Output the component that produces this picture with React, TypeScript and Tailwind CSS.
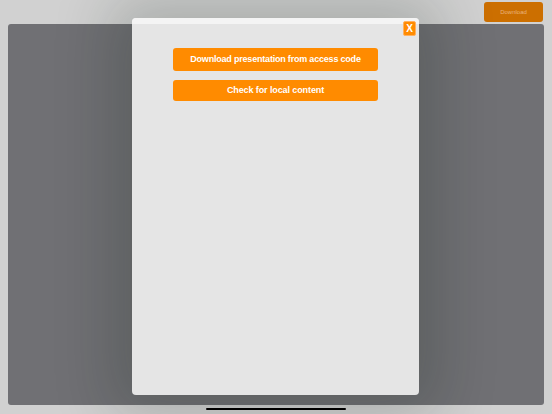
import React from "react";

export default function App() {
  return (
    <div
      className="relative w-[552px] h-[414px] overflow-hidden bg-[#d1d1d1] flex flex-col"
      style={{ fontFamily: '"Liberation Sans", Arial, sans-serif' }}
    >
      <div className="h-[24px] flex justify-end items-start pt-[2px] pr-[9px]">
        <button className="w-[59px] h-[20px] rounded-[3px] bg-[#cc6f00] text-[6px] text-[#eab37c] flex items-center justify-center">
          Download
        </button>
      </div>
      <div className="flex-1 mx-[8px] mb-[9px] rounded-[3px] bg-[#707074]" />

      <div className="absolute left-[132px] top-[18px] w-[287px] h-[377px] rounded-[4px] bg-[#e5e5e5] overflow-hidden flex flex-col shadow-[0_0_60px_20px_rgba(15,30,20,0.2)]">
        <div className="h-[6px] bg-[#f4f4f4]" />
        <div className="flex flex-col items-center pt-[24px] gap-[9px]">
          <button className="w-[205px] h-[23px] rounded-[3px] bg-[#ff8b00] text-white font-bold text-[9px] tracking-[-0.2px] flex items-center justify-center">
            Download presentation from access code
          </button>
          <button className="w-[205px] h-[21px] rounded-[3px] bg-[#ff8b00] text-white font-bold text-[9px] tracking-[-0.1px] flex items-center justify-center">
            Check for local content
          </button>
        </div>
        <button className="absolute right-[3px] top-[3px] w-[13px] h-[15px] rounded-[2px] bg-[#ff8b00] border border-[#ffb060] text-white font-bold text-[10px] flex items-center justify-center leading-none">
          X
        </button>
      </div>

      <div className="absolute left-[206px] top-[408px] w-[140px] h-[2px] rounded-full bg-black" />
    </div>
  );
}
